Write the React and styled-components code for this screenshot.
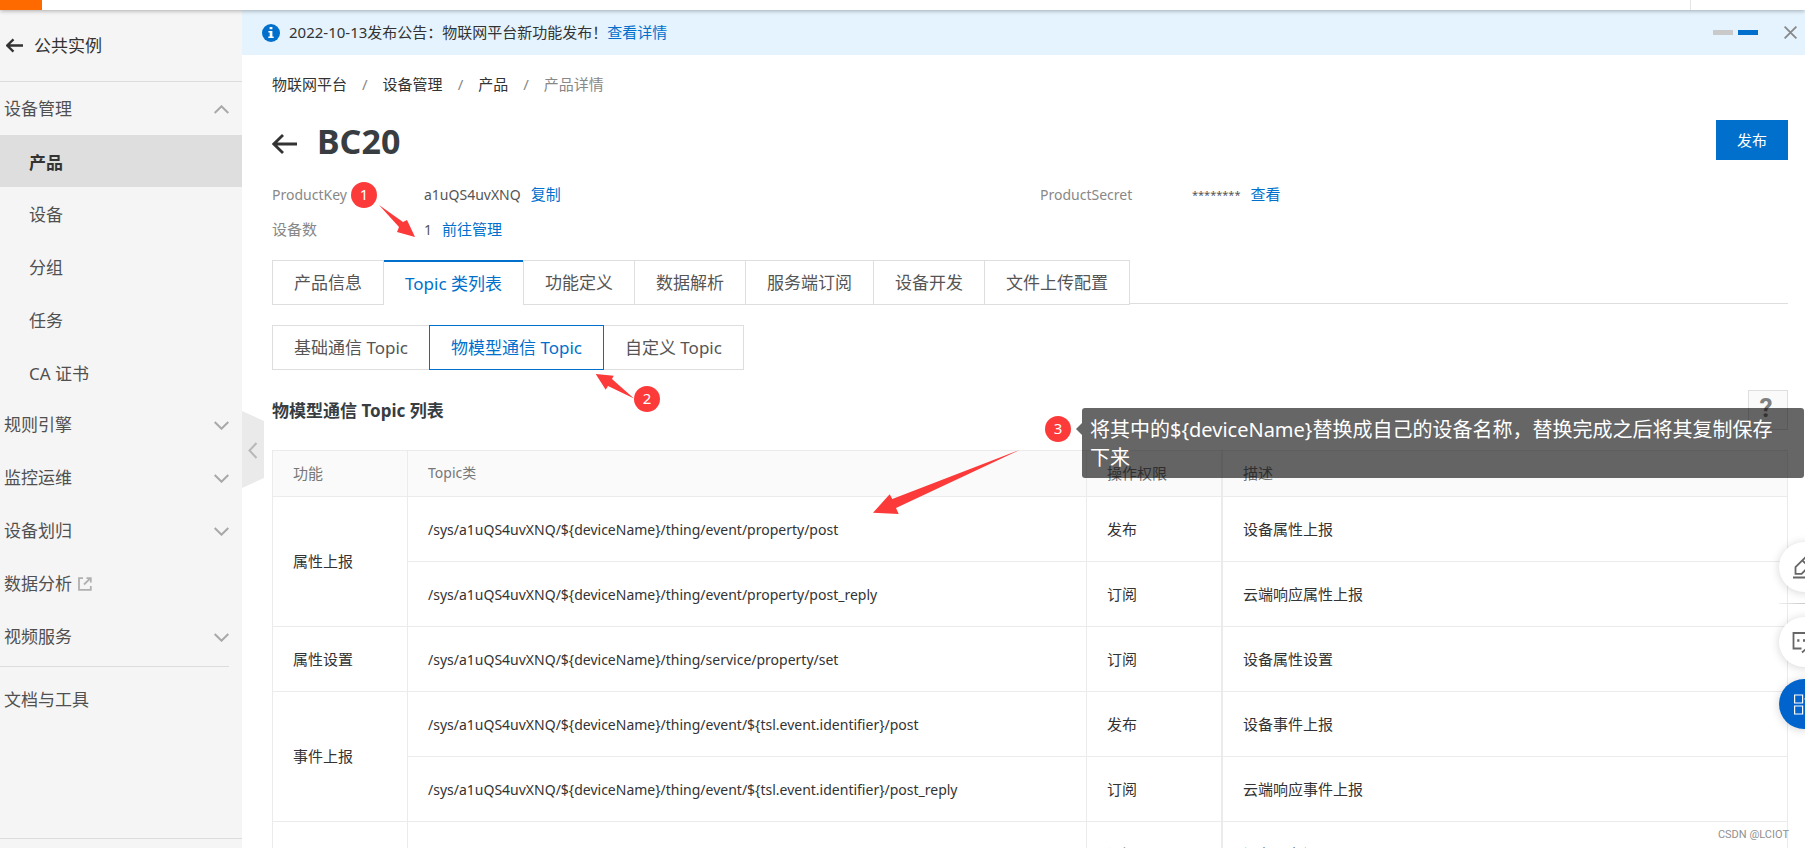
import React from "react";
import styled, { createGlobalStyle, css } from "styled-components";

const blue = "#0070cc";
const red = "#fc3a3a";

const GlobalStyle = createGlobalStyle`
  *, *::before, *::after { box-sizing: border-box; }
  body {
    margin: 0;
    background: #fff;
    color: #333;
    font: 15px/20px "Noto Sans", "Noto Sans CJK SC", sans-serif;
  }
  button { font: inherit; color: inherit; border: 0; background: none; padding: 0; cursor: pointer; }
  a { color: inherit; text-decoration: none; }
  h1, h2, ul, ol, dl, dd { margin: 0; padding: 0; list-style: none; }
  svg { display: block; flex: none; }
`;

const Page = styled.div`
  position: relative;
  display: flex;
  flex-direction: column;
  height: 100vh;
  overflow: hidden;
`;

const TopBar = styled.header`
  position: relative;
  z-index: 2;
  flex: none;
  display: flex;
  justify-content: space-between;
  height: 10px;
  background: #fff;
  box-shadow: 0 1px 4px rgba(0, 0, 0, 0.3);
`;

const MenuBlock = styled.div`
  width: 42px;
  background: #ff6a00;
`;

const TopBarEnd = styled.div`
  width: 115px;
  border-left: 1px solid #e5e5e5;
`;

const Body = styled.div`
  flex: 1;
  min-height: 0;
  display: flex;
`;

const Sidebar = styled.nav`
  position: relative;
  flex: none;
  width: 242px;
  display: flex;
  flex-direction: column;
  background: #f5f5f5;
  color: #505050;
  font-size: 17px;
`;

const InstanceLink = styled.a`
  display: flex;
  align-items: center;
  gap: 11px;
  height: 72px;
  padding-left: 6px;
  border-bottom: 1px solid #dcdcdc;
  color: #333;
`;

const groupRow = css`
  display: flex;
  align-items: center;
  width: 100%;
  height: 53px;
  padding: 1px 13px 0 4px;
  text-align: left;
`;

const GroupButton = styled.button`
  ${groupRow}
  justify-content: space-between;
`;

const GroupLink = styled.a`
  ${groupRow}
  gap: 6px;
`;

const SubList = styled.ul`
  display: flex;
  flex-direction: column;
  justify-content: space-between;
  height: 263px;
`;

const SubLink = styled.a`
  display: flex;
  align-items: center;
  height: 52px;
  padding: 3px 0 0 29px;
  background: ${(p) => (p.$active ? "#dedede" : "transparent")};
  color: ${(p) => (p.$active ? "#333" : "inherit")};
  font-weight: ${(p) => (p.$active ? 700 : 400)};
`;

const DocsSection = styled.div`
  margin: 3px 13px 0 0;
  padding-top: 6px;
  border-top: 1px solid #dcdcdc;
`;

const SidebarFoot = styled.div`
  height: 10px;
  margin-top: auto;
  border-top: 1px solid #dcdcdc;
`;

const CollapseHandle = styled.button`
  position: absolute;
  top: 401px;
  left: 100%;
`;

const Main = styled.main`
  flex: 1;
  min-width: 0;
`;

const Notice = styled.div`
  display: flex;
  align-items: center;
  height: 45px;
  padding: 0 8px 0 20px;
  background: #e4f3fe;
`;

const NoticeText = styled.p`
  flex: 1;
  margin: 0 0 0 9px;
  padding-bottom: 2px;
`;

const TextLink = styled.a`
  color: ${blue};
  font-size: 15px;
`;

const Pager = styled.div`
  display: flex;
  gap: 5px;
  margin-right: 26px;
`;

const PagerDot = styled.button`
  width: 20px;
  height: 5px;
  background: ${(p) => (p.$active ? blue : "#c9c9c9")};
`;

const Content = styled.div`
  padding: 19px 17px 0 30px;
`;

const Crumbs = styled.ol`
  display: flex;
  li + li::before {
    content: "/";
    margin: 0 15px;
    color: #888;
  }
`;

const CurrentCrumb = styled.li`
  color: #888;
`;

const TitleRow = styled.div`
  display: flex;
  align-items: center;
  gap: 20px;
  margin-top: 26px;
`;

const BackLink = styled.a`
  padding-top: 8px;
`;

const Title = styled.h1`
  flex: 1;
  padding-top: 2px;
  font-size: 34px;
  line-height: 38px;
  color: #373d41;
`;

const PublishButton = styled.button`
  width: 72px;
  height: 40px;
  background: ${blue};
  color: #fff;
`;

const Meta = styled.dl`
  display: grid;
  grid-template-columns: 1fr 1fr;
  column-gap: 20px;
  margin-top: 17px;
  line-height: 35px;
`;

const MetaItem = styled.div`
  display: flex;
  dt {
    width: 152px;
    color: #888;
    font-size: ${(p) => (p.$latin ? 14 : 15)}px;
  }
  dd {
    display: flex;
    gap: 10px;
    color: #555;
    font-size: 14px;
  }
`;

const Masked = styled.span`
  font-size: 11px;
`;

const Tabs = styled.div`
  display: flex;
  margin-top: 13px;
`;

const tabBase = css`
  height: 45px;
  padding: 0 21px;
  border: 1px solid #dedede;
  color: #555;
  font-size: 17px;
  white-space: nowrap;
`;

const Tab = styled.button`
  ${tabBase}
  & + & { border-left: 0; }
  &[aria-selected="true"] {
    border-right: 0;
    border-bottom: 0;
    border-top: 2px solid ${blue};
    color: ${blue};
  }
  &[aria-selected="true"] + & { border-left: 1px solid #dedede; }
`;

const TabRule = styled.div`
  flex: 1;
  height: 44px;
  border-bottom: 1px solid #dedede;
`;

const SubTabs = styled.div`
  display: flex;
  margin-top: 20px;
`;

const SubTab = styled.button`
  ${tabBase}
  & + & { margin-left: -1px; }
  &[aria-selected="true"] {
    z-index: 1;
    border-color: ${blue};
    color: ${blue};
  }
`;

const SectionHead = styled.div`
  display: flex;
  align-items: center;
  justify-content: space-between;
  margin: 20px 0;
`;

const SectionTitle = styled.h2`
  padding-top: 2px;
  font-size: 17px;
  color: #373d41;
`;

const HelpButton = styled.button`
  width: 40px;
  height: 40px;
  padding: 0 4px 4px 0;
  border: 1px solid #dedede;
  background: #fafafa;
  color: #808080;
  font: 700 26px/32px Roboto, sans-serif;
`;

const TopicTable = styled.table`
  width: 100%;
  table-layout: fixed;
  border-collapse: separate;
  border-spacing: 0;
  border-top: 1px solid #ebebeb;

  th, td {
    height: 65px;
    padding: 0 20px;
    border: solid #ebebeb;
    border-width: 0 0 1px 1px;
    text-align: left;
    font-weight: 400;
  }
  thead th {
    height: 46px;
    padding-bottom: 2px;
    background: #fafafa;
    color: #777;
  }
  td[rowspan="2"] { padding-bottom: 2px; }
  th:last-child, td:last-child { border-width: 0 1px 1px 2px; }
`;

const Col = styled.col`
  width: ${(p) => p.$width};
`;

const LatinText = styled.span`
  font-size: 14px;
`;

const Dock = styled.aside`
  position: absolute;
  top: 542px;
  right: -24px;
  width: 50px;
`;

const DockButton = styled.button`
  display: flex;
  align-items: center;
  justify-content: center;
  width: 50px;
  height: 50px;
  border-radius: 50%;
  background: ${(p) => (p.$primary ? "#0064cc" : "#fff")};
  box-shadow: 0 1px 10px rgba(0, 0, 0, 0.17);
  margin-bottom: ${(p) => p.$gap || 0}px;
`;

const DockRule = styled.div`
  height: 1px;
  margin-bottom: 13px;
  background: linear-gradient(90deg, #eee, #ccc, #eee);
`;

const Arrows = styled.svg`
  position: absolute;
  top: 0;
  left: 0;
  pointer-events: none;
`;

const Marker = styled.span`
  position: absolute;
  left: ${(p) => p.$x}px;
  top: ${(p) => p.$y}px;
  width: 26px;
  height: 26px;
  border-radius: 50%;
  background: ${red};
  color: #fff;
  font-size: 15px;
  line-height: 24px;
  text-align: center;
`;

const Tooltip = styled.div`
  position: absolute;
  top: 408px;
  left: 1082px;
  right: 1px;
  height: 70px;
  padding: 8px 24px 6px 8px;
  border-radius: 3px;
  background: rgba(0, 0, 0, 0.6);
  color: #fff;
  font-size: 20px;
  line-height: 28px;

  &::before {
    content: "";
    position: absolute;
    right: 100%;
    top: 15px;
    border: solid transparent;
    border-width: 6px 6px 6px 0;
    border-right-color: rgba(0, 0, 0, 0.6);
  }
`;

const Watermark = styled.span`
  position: absolute;
  right: 16px;
  bottom: 3px;
  color: #909090;
  font: 11px/20px Roboto, sans-serif;
`;

const Chevron = ({ up }) => (
  <svg width="15" height="9" viewBox="0 0 15 9" fill="none" stroke="#a8a8a8" strokeWidth="2">
    <path d={up ? "M.7 8 7.5 1.3 14.3 8" : "M.7 1 7.5 7.7 14.3 1"} />
  </svg>
);

const ExternalIcon = () => (
  <svg width="14" height="14" viewBox="0 0 14 14" fill="none" stroke="#b0b0b0" strokeWidth="1.8">
    <path d="M5 1.2H1v11.6h11.8V9M6 7.5 12 1.6M8.5 1.2h4.3v4.3" />
  </svg>
);

const ArrowLeft = ({ width, height, stroke }) => (
  <svg width={width} height={height} viewBox="0 0 25 20" fill="none" stroke="#333" strokeWidth={stroke}>
    <path d="M1.6 10H25M11 1 1.8 10 11 19" />
  </svg>
);

const subItems = ["产品", "设备", "分组", "任务", "CA 证书"];
const tabs = ["产品信息", "Topic 类列表", "功能定义", "数据解析", "服务端订阅", "设备开发", "文件上传配置"];
const subTabs = ["基础通信 Topic", "物模型通信 Topic", "自定义 Topic"];

const base = "/sys/a1uQS4uvXNQ/${deviceName}/thing/";
const groups = [
  {
    name: "属性上报",
    rows: [
      ["event/property/post", "发布", "设备属性上报"],
      ["event/property/post_reply", "订阅", "云端响应属性上报"],
    ],
  },
  { name: "属性设置", rows: [["service/property/set", "订阅", "设备属性设置"]] },
  {
    name: "事件上报",
    rows: [
      ["event/${tsl.event.identifier}/post", "发布", "设备事件上报"],
      ["event/${tsl.event.identifier}/post_reply", "订阅", "云端响应事件上报"],
    ],
  },
  {
    name: "服务调用",
    rows: [
      ["service/${tsl.service.identifier}", "订阅", "设备服务调用"],
      ["service/${tsl.service.identifier}_reply", "发布", "设备端响应服务调用"],
    ],
  },
];

export default function App() {
  return (
    <>
      <GlobalStyle />
      <Page>
        <TopBar>
          <MenuBlock />
          <TopBarEnd />
        </TopBar>
        <Body>
          <Sidebar>
            <InstanceLink href="#instance">
              <ArrowLeft width={17} height={15} stroke={3.4} />
              公共实例
            </InstanceLink>
            <GroupButton aria-expanded="true">
              设备管理
              <Chevron up />
            </GroupButton>
            <SubList>
              {subItems.map((item, i) => (
                <li key={item}>
                  <SubLink href="#" $active={i === 0}>{item}</SubLink>
                </li>
              ))}
            </SubList>
            <GroupButton>规则引擎<Chevron /></GroupButton>
            <GroupButton>监控运维<Chevron /></GroupButton>
            <GroupButton>设备划归<Chevron /></GroupButton>
            <GroupLink href="#analysis">数据分析<ExternalIcon /></GroupLink>
            <GroupButton>视频服务<Chevron /></GroupButton>
            <DocsSection>
              <GroupLink href="#docs">文档与工具</GroupLink>
            </DocsSection>
            <SidebarFoot />
            <CollapseHandle aria-label="收起">
              <svg width="22" height="77" viewBox="0 0 22 77" fill="none">
                <path d="M0 0 22 10V67L0 77Z" fill="#eaeaea" />
                <path d="M14.5 32 7.5 39.5 14.5 47" stroke="#b8b8b8" strokeWidth="2" />
              </svg>
            </CollapseHandle>
          </Sidebar>

          <Main>
            <Notice>
              <svg width="18" height="18" viewBox="0 0 18 18">
                <circle cx="9" cy="9" r="9" fill={blue} />
                <path d="M7.6 3h2.8v2.3H7.6zM6.4 7h4v5.4h1.3V14H6.3v-1.6h1.4V8.6H6.4z" fill="#fff" />
              </svg>
              <NoticeText>
                2022-10-13发布公告：物联网平台新功能发布！<TextLink href="#notice">查看详情</TextLink>
              </NoticeText>
              <Pager>
                <PagerDot aria-label="1" />
                <PagerDot aria-label="2" $active />
              </Pager>
              <button aria-label="关闭">
                <svg width="13" height="13" viewBox="0 0 13 13" stroke="#888" strokeWidth="1.8">
                  <path d="M.6.6 12.4 12.4M12.4.6.6 12.4" />
                </svg>
              </button>
            </Notice>

            <Content>
              <Crumbs>
                <li><a href="#iot">物联网平台</a></li>
                <li><a href="#devices">设备管理</a></li>
                <li><a href="#products">产品</a></li>
                <CurrentCrumb>产品详情</CurrentCrumb>
              </Crumbs>

              <TitleRow>
                <BackLink href="#back" aria-label="返回">
                  <ArrowLeft width={25} height={20} stroke={2.8} />
                </BackLink>
                <Title>BC20</Title>
                <PublishButton>发布</PublishButton>
              </TitleRow>

              <Meta>
                <MetaItem $latin>
                  <dt>ProductKey</dt>
                  <dd>a1uQS4uvXNQ <TextLink href="#copy">复制</TextLink></dd>
                </MetaItem>
                <MetaItem $latin>
                  <dt>ProductSecret</dt>
                  <dd><Masked>********</Masked> <TextLink href="#show">查看</TextLink></dd>
                </MetaItem>
                <MetaItem>
                  <dt>设备数</dt>
                  <dd>1 <TextLink href="#manage">前往管理</TextLink></dd>
                </MetaItem>
              </Meta>

              <Tabs role="tablist">
                {tabs.map((t, i) => (
                  <Tab key={t} role="tab" aria-selected={i === 1}>{t}</Tab>
                ))}
                <TabRule />
              </Tabs>

              <SubTabs role="tablist">
                {subTabs.map((t, i) => (
                  <SubTab key={t} role="tab" aria-selected={i === 1}>{t}</SubTab>
                ))}
              </SubTabs>

              <SectionHead>
                <SectionTitle>物模型通信 Topic 列表</SectionTitle>
                <HelpButton>?</HelpButton>
              </SectionHead>

              <TopicTable>
                <colgroup>
                  <Col $width="135px" />
                  <Col $width="auto" />
                  <Col $width="135px" />
                  <Col $width="567px" />
                </colgroup>
                <thead>
                  <tr>
                    <th scope="col">功能</th>
                    <th scope="col"><LatinText>Topic类</LatinText></th>
                    <th scope="col">操作权限</th>
                    <th scope="col">描述</th>
                  </tr>
                </thead>
                <tbody>
                  {groups.map((g) =>
                    g.rows.map(([path, access, note], i) => (
                      <tr key={path}>
                        {i === 0 && <td rowSpan={g.rows.length}>{g.name}</td>}
                        <td><LatinText>{base + path}</LatinText></td>
                        <td>{access}</td>
                        <td>{note}</td>
                      </tr>
                    ))
                  )}
                </tbody>
              </TopicTable>
            </Content>
          </Main>
        </Body>

        <Dock>
          <DockButton $gap={11} aria-label="编辑">
            <svg width="24" height="24" viewBox="0 0 24 24" fill="none" stroke="#666" strokeWidth="1.8">
              <path d="M1 22.5h22M3.5 18.8v-6.6L13.5 2.2l6.3 6.3L9.6 18.8ZM10.5 5.5l6 6" />
            </svg>
          </DockButton>
          <DockRule />
          <DockButton $gap={12} aria-label="咨询">
            <svg width="24" height="24" viewBox="0 0 24 24" fill="none" stroke="#666" strokeWidth="1.8">
              <path d="M9.5 18.5H1.5V3h21v15.5h-8L10 22.5" />
              <path d="M5.2 10.5h2.2M11 10.5h2.2M16.8 10.5H19" strokeWidth="2.4" />
            </svg>
          </DockButton>
          <DockButton $primary aria-label="应用">
            <svg width="22" height="22" viewBox="0 0 22 22" fill="none" stroke="#fff" strokeWidth="1.2">
              <path d="M1.6 2h8v8h-8zM1.6 13h8v8h-8zM12.6 13h8v8h-8zM11.5 5.8h8M15.5 1.8v8" />
            </svg>
          </DockButton>
        </Dock>

        <Arrows width="1100" height="540" viewBox="0 0 1100 540" fill={red} aria-hidden="true">
          <path d="M379 205 403 222 407 220 415 237 397 232 399 227Z" />
          <path d="M595.7 374 613.7 375.7 612 379 634 398.5 608 386 605.7 389.7Z" />
          <path d="M873 512.7 889.7 494.3 892.3 499 1020 449.7 896 508 898.7 514Z" />
        </Arrows>
        <Marker $x={351} $y={182}>1</Marker>
        <Marker $x={634} $y={386}>2</Marker>
        <Marker $x={1045} $y={416}>3</Marker>
        <Tooltip role="tooltip">
          将其中的${"{deviceName}"}替换成自己的设备名称，替换完成之后将其复制保存下来
        </Tooltip>
        <Watermark>CSDN @LCIOT</Watermark>
      </Page>
    </>
  );
}
